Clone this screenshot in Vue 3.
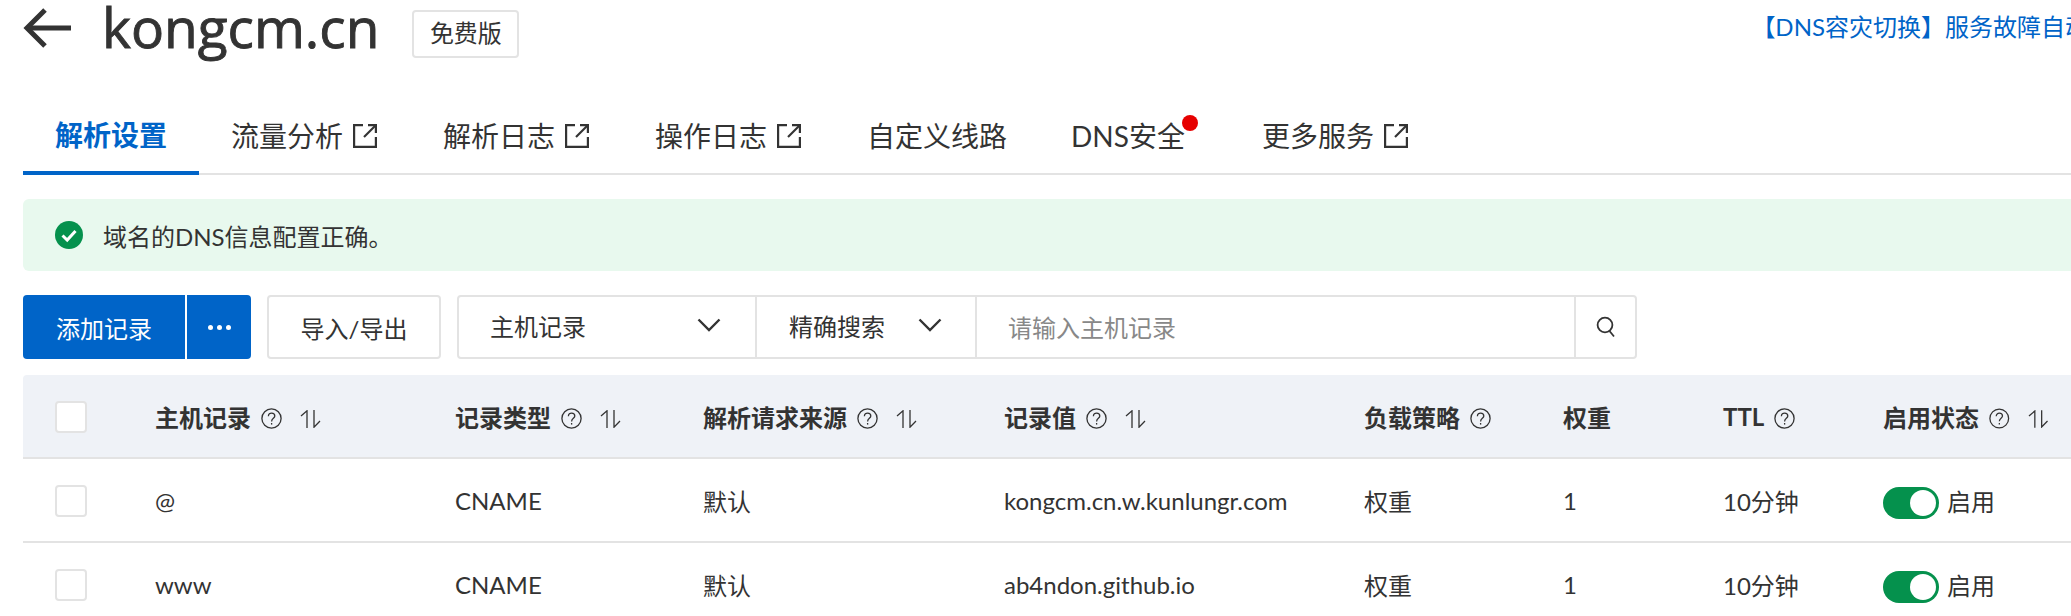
<script setup>
const tabs = [
  { label: '解析设置', active: true },
  { label: '流量分析', external: true },
  { label: '解析日志', external: true },
  { label: '操作日志', external: true },
  { label: '自定义线路' },
  { label: 'DNS安全', dot: true },
  { label: '更多服务', external: true }
]

const columns = [
  { label: '主机记录', help: true, sort: true },
  { label: '记录类型', help: true, sort: true },
  { label: '解析请求来源', help: true, sort: true },
  { label: '记录值', help: true, sort: true },
  { label: '负载策略', help: true },
  { label: '权重' },
  { label: 'TTL', help: true },
  { label: '启用状态', help: true, sort: true }
]

const rows = [
  { host: '@', type: 'CNAME', source: '默认', value: 'kongcm.cn.w.kunlungr.com', policy: '权重', weight: '1', ttl: '10分钟' },
  { host: 'www', type: 'CNAME', source: '默认', value: 'ab4ndon.github.io', policy: '权重', weight: '1', ttl: '10分钟' }
]
</script>

<template>
  <div class="page">
    <header class="top">
      <svg class="back" viewBox="0 0 48 40" fill="none" stroke="#333" stroke-width="5">
        <path d="M22 2 L4 20 L22 38" />
        <path d="M4 20 H48" />
      </svg>
      <h1 class="title">kongcm.cn</h1>
      <span class="badge">免费版</span>
      <a class="notice">【DNS容灾切换】服务故障自动切换</a>
    </header>

    <nav class="tabs">
      <div v-for="tab in tabs" :key="tab.label" class="tab" :class="{ active: tab.active }">
        <span class="tab-label">{{ tab.label }}</span>
        <i v-if="tab.dot" class="dot"></i>
        <svg v-if="tab.external" class="ext" viewBox="0 0 24 24" fill="none" stroke="#333" stroke-width="2.2">
          <path d="M10 1.1 H1.1 V22.9 H22.9 V13" />
          <path d="M11 13 L22 2" />
          <path d="M15 1.1 H22.9 V9" />
        </svg>
      </div>
    </nav>

    <div class="alert">
      <svg class="alert-icon" viewBox="0 0 28 28">
        <circle cx="14" cy="14" r="14" fill="#05914d" />
        <path d="M7.5 14.5 L12.2 19 L20.5 10" fill="none" stroke="#fff" stroke-width="3" />
      </svg>
      <span>域名的DNS信息配置正确。</span>
    </div>

    <div class="toolbar">
      <div class="btn-split">
        <button class="primary add">添加记录</button>
        <button class="primary more" aria-label="更多">
          <i></i><i></i><i></i>
        </button>
      </div>
      <button class="plain">导入/导出</button>
      <div class="search">
        <div class="select host">
          <span>主机记录</span>
          <svg class="chevron" viewBox="0 0 24 14" fill="none" stroke="#333" stroke-width="2.4">
            <path d="M1.5 1.5 L12 12 L22.5 1.5" />
          </svg>
        </div>
        <div class="select mode">
          <span>精确搜索</span>
          <svg class="chevron" viewBox="0 0 24 14" fill="none" stroke="#333" stroke-width="2.4">
            <path d="M1.5 1.5 L12 12 L22.5 1.5" />
          </svg>
        </div>
        <div class="field">请输入主机记录</div>
        <div class="search-btn">
          <svg viewBox="0 0 20 22" width="20" height="22" fill="none" stroke="#333" stroke-width="1.8">
            <circle cx="9" cy="9" r="7.4" />
            <path d="M13.5 15 L18 20.5" />
          </svg>
        </div>
      </div>
    </div>

    <div class="table">
      <div class="row head">
        <div class="check-cell"><span class="checkbox"></span></div>
        <div v-for="col in columns" :key="col.label" class="cell">
          <span class="head-label">{{ col.label }}</span>
          <svg v-if="col.help" class="help" viewBox="0 0 21 21" fill="none" stroke="#333" stroke-width="1.3">
            <circle cx="10.5" cy="10.5" r="9.6" />
            <path d="M7.4 8.2 C7.4 3.9 13.8 4.3 13.8 8 C13.8 10.3 10.6 10.4 10.6 13.4" />
            <path d="M10.6 15 V16.6" />
          </svg>
          <svg v-if="col.sort" class="sort" viewBox="0 0 21 18" fill="none" stroke="#333" stroke-width="1.3">
            <path d="M1 6 L7 0.8 V18" />
            <path d="M14 0 V17.2 L20 11" />
          </svg>
        </div>
      </div>

      <div v-for="row in rows" :key="row.host" class="row">
        <div class="check-cell"><span class="checkbox"></span></div>
        <div class="cell">{{ row.host }}</div>
        <div class="cell">{{ row.type }}</div>
        <div class="cell">{{ row.source }}</div>
        <div class="cell">{{ row.value }}</div>
        <div class="cell">{{ row.policy }}</div>
        <div class="cell">{{ row.weight }}</div>
        <div class="cell">{{ row.ttl }}</div>
        <div class="cell status">
          <span class="switch"><i></i></span>
          <span>启用</span>
        </div>
      </div>
    </div>
  </div>
</template>

<style>
html,
body {
  margin: 0;
  background: #fff;
  overflow: hidden;
}
</style>

<style scoped>
.page {
  width: 2071px;
  height: 616px;
  overflow: hidden;
  box-sizing: border-box;
  padding-left: 23px;
  font-family: "Lato", "Noto Sans CJK SC", sans-serif;
  font-size: 24px;
  color: #333;
}

.top {
  display: flex;
  align-items: flex-start;
  height: 99px;
  white-space: nowrap;
}

.top > * {
  flex-shrink: 0;
}

.back {
  width: 48px;
  height: 40px;
  margin-top: 8px;
}

.title {
  margin: 0 0 0 31px;
  font-family: "Open Sans", sans-serif;
  font-size: 55px;
  line-height: 54px;
  font-weight: 400;
  -webkit-text-stroke: 0.9px #333;
}

.badge {
  box-sizing: border-box;
  width: 107px;
  height: 48px;
  margin: 10px 0 0 33px;
  border: 2px solid #e3e3e3;
  border-radius: 4px;
  line-height: 42px;
  text-align: center;
}

.notice {
  margin: 8px 0 0 1232px;
  line-height: 38px;
  color: #0064c8;
}

.tabs {
  display: flex;
  height: 76px;
  box-sizing: border-box;
  border-bottom: 2px solid #e3e3e3;
}

.tab {
  display: flex;
  align-items: center;
  gap: 10px;
  height: 74px;
  padding: 0 32px;
  font-size: 28px;
  line-height: 76px;
  white-space: nowrap;
}

.tab.active {
  color: #0064c8;
  font-weight: 700;
  height: 76px;
  border-bottom: 4px solid #0064c8;
  box-sizing: border-box;
}

.dot {
  width: 16px;
  height: 16px;
  margin: -26px 0 0 -13px;
  border-radius: 50%;
  background: #e60000;
}

.ext {
  width: 24px;
  height: 24px;
  margin-right: 2px;
}

.alert {
  display: flex;
  align-items: center;
  gap: 20px;
  height: 72px;
  margin-top: 24px;
  padding-left: 32px;
  background: #e8f9ee;
  border-radius: 6px 0 0 6px;
}

.alert-icon {
  width: 28px;
  height: 28px;
}

.toolbar {
  display: flex;
  gap: 16px;
  height: 64px;
  margin-top: 24px;
}

.btn-split {
  display: flex;
  gap: 2px;
}

button {
  margin: 0;
  padding: 0;
  font: inherit;
  box-sizing: border-box;
}

.primary {
  border: 0;
  background: #0064c8;
  color: #fff;
}

.add {
  width: 162px;
  border-radius: 4px 0 0 4px;
}

.more {
  display: flex;
  align-items: center;
  justify-content: center;
  gap: 4px;
  width: 64px;
  border-radius: 0 4px 4px 0;
}

.more i {
  width: 5px;
  height: 5px;
  border-radius: 50%;
  background: #fff;
}

.plain {
  width: 174px;
  background: #fff;
  color: #333;
  border: 2px solid #e3e3e3;
  border-radius: 4px;
}

.search {
  display: flex;
  width: 1180px;
  box-sizing: border-box;
  border: 2px solid #e3e3e3;
  border-radius: 4px;
  line-height: 62px;
}

.select {
  display: flex;
  align-items: center;
  justify-content: space-between;
  box-sizing: border-box;
  border-right: 2px solid #e3e3e3;
}

.host {
  width: 298px;
  padding: 0 34px 0 31px;
}

.mode {
  width: 220px;
  padding: 0 33px 0 32px;
}

.chevron {
  width: 24px;
  height: 14px;
  margin-top: -4px;
}

.field {
  width: 599px;
  box-sizing: border-box;
  padding-left: 31px;
  color: #888;
  border-right: 2px solid #e3e3e3;
}

.search-btn {
  flex: 1;
  display: flex;
  align-items: center;
  justify-content: center;
  margin-top: -1px;
}

.table {
  margin-top: 16px;
}

.row {
  display: grid;
  grid-template-columns: 132px 300px 248px 301px 360px 199px 160px 160px 165px;
  align-items: center;
  height: 84px;
  padding-top: 2px;
  box-sizing: border-box;
  border-bottom: 2px solid #e3e3e3;
}

.row.head {
  background: #eff2f7;
  border-radius: 4px 0 0 0;
}

.check-cell {
  display: flex;
  padding-left: 32px;
}

.checkbox {
  width: 32px;
  height: 32px;
  box-sizing: border-box;
  background: #fff;
  border: 2px solid #e3e3e3;
  border-radius: 4px;
}

.cell {
  display: flex;
  align-items: center;
  margin-top: -2px;
  white-space: nowrap;
}

.head-label {
  font-weight: 700;
}

.help {
  width: 21px;
  height: 21px;
  margin: 4px 0 0 10px;
}

.sort {
  width: 21px;
  height: 18px;
  margin: 6px 0 0 18px;
}

.status {
  gap: 8px;
}

.switch {
  position: relative;
  width: 56px;
  height: 32px;
  margin-top: 6px;
  border-radius: 16px;
  background: #05914d;
}

.switch i {
  position: absolute;
  top: 3px;
  right: 3px;
  width: 26px;
  height: 26px;
  border-radius: 50%;
  background: #fff;
}
</style>
